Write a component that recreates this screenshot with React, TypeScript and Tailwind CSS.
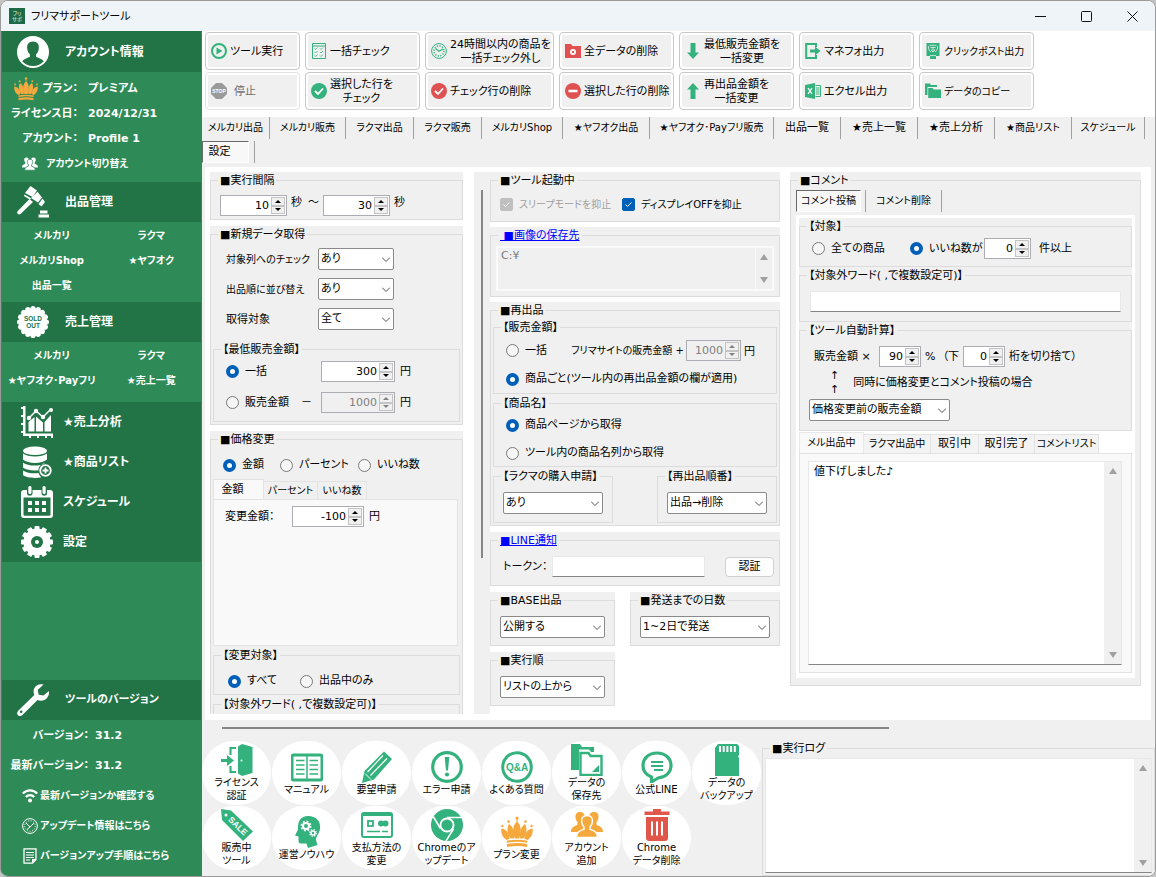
import React, { useState } from "react";
import clsx from "clsx";

/* ---------- Icons ---------- */

type IconProps = { className?: string };

function Svg({ className = "size-8", box = 32, children }: { className?: string; box?: number; children: React.ReactNode }) {
  return (
    <svg viewBox={`0 0 ${box} ${box}`} className={clsx("shrink-0", className)} fill="currentColor" aria-hidden="true">
      {children}
    </svg>
  );
}

function CrownIcon({ className }: IconProps) {
  const side = (
    <>
      <circle cx="7.6" cy="5.6" r="1.3" />
      <path d="M8 8c4.200 2.500 5.600 8 5 14.500H9.600C6.400 18.500 5.400 12.500 8 8z" />
      <circle cx="1.4" cy="10" r="1.2" />
      <path d="M.5 12.500c4.500.5 7.500 4 8.200 10.200L5.500 24C1.500 21.500-.5 17 .5 12.500z" />
    </>
  );
  return (
    <Svg className={className}>
      <circle cx="16" cy="2" r="1.600" />
      <path d="M15.400 3h1.200v3h-1.200zM16 5.500c4.500 4 4.600 10 2.200 17h-4.400c-2.400-7-2.300-13 2.200-17z" />
      {side}
      <g transform="translate(32 0) scale(-1 1)">{side}</g>
      <path d="M5.500 24.800c7-1.400 14-1.400 21 0l-.5 2c-7-1.400-13-1.400-20 0z" />
      <path d="M6 28c7-1.400 13-1.400 20 0v3c-7-1.300-13-1.300-20 0z" />
    </Svg>
  );
}

// outline is the colour behind the icon, it separates the front figure from the two at the back
function UsersIcon({ className, outline = "#fff" }: IconProps & { outline?: string }) {
  const back = (
    <path d="M9 3c3.600 0 5.300 2.500 4.600 6-.3 1.800-1 3-1.800 4v2l3.200 2v6H0c0-4.500 2.500-5.500 6.500-7.300V13c-1-1-1.600-2.400-1.900-4C4 5.500 5.400 3 9 3z" />
  );
  return (
    <Svg className={className}>
      {back}
      <g transform="translate(32 0) scale(-1 1)">{back}</g>
      <path
        d="M16 6.500c4.200 0 6 2.800 5.300 6.600-.3 2-1.200 3.700-2.200 4.700v2.400c4.500 2 7.400 2.800 7.400 8.300h-21c0-5.500 2.900-6.300 7.400-8.300v-2.400c-1-1-1.900-2.700-2.200-4.700-.7-3.800 1.100-6.600 5.300-6.600z"
        stroke={outline}
        strokeWidth="1.500"
      />
    </Svg>
  );
}

function AccountIcon() {
  return (
    <Svg>
      <circle cx="16" cy="16" r="16" />
      <path
        fill="#227447"
        d="M16 5.500c4.300 0 6.300 3 5.800 7-.2 2.400-1.200 4.500-2.700 5.800v2.500c3 1.700 6 2.200 7.700 4.400C24 28.300 20.500 30 16 30S8 28.300 5.200 25.200c1.700-2.200 4.700-2.700 7.700-4.400v-2.500c-1.500-1.300-2.500-3.400-2.700-5.800-.5-4 1.500-7 5.800-7z"
      />
    </Svg>
  );
}

function GavelIcon() {
  return (
    <Svg>
      <path d="M13.500 0l6.500 4.500-4.500 6.500L8 7z" />
      <path d="M8.500 8.300l19 11.500-1.300 2L7.300 10.200z" fill="none" />
      <path d="M20.500 5.800l4.500 5.700-4 5-7-4.500zM7.500 8.500l6.500 3.700-1 1.500-6-3.700zM25.500 12.500l2.500 3.500-3.500 4.500-3-2.500z" />
      <path d="M12.500 13l3.500 3L3.500 28c-2.200 1.500-4.500-1-2.700-3z" />
      <path d="M23 24.500h7.500v3H23zM21.500 28.500H32V31.500H21.500z" />
    </Svg>
  );
}

function SoldOutIcon() {
  const bumps = Array.from({ length: 16 }, (_, i) => i * 22.5);
  return (
    <Svg>
      <circle cx="16" cy="16" r="14" />
      {bumps.map((a) => (
        <circle key={a} cx="16" cy="2.600" r="2.600" transform={`rotate(${a} 16 16)`} />
      ))}
      <g fill="#227447" fontFamily="Liberation Sans, sans-serif" fontWeight="bold" fontSize="6.500" textAnchor="middle">
        <text x="16" y="15">SOLD</text>
        <text x="16" y="21.500">OUT</text>
      </g>
    </Svg>
  );
}

function AnalysisIcon() {
  return (
    <Svg>
      <path d="M2 0h2.500v27.500H32V30H2z" />
      <path d="M0 1h2v2H0zM0 9h2v2H0zM0 17h2v2H0zM0 25h2v2H0zM8 30h2v2H8zM16 30h2v2h-2zM24 30h2v2h-2zM30 30h2v2h-2z" />
      <path d="M7.500 16l6-5v14.500h-6zM15 10.500l7 6v9h-7zM23.500 16l6.500-7v16.500h-6.500z" />
      <path d="M8 12l7-7 7 6 8-8" fill="none" stroke="currentColor" strokeWidth="1.500" />
      <circle cx="8" cy="12" r="2.200" />
      <circle cx="15" cy="5" r="2.200" />
      <circle cx="22" cy="11" r="2.200" />
      <circle cx="30" cy="4" r="2" />
    </Svg>
  );
}

function DatabaseIcon() {
  return (
    <Svg>
      <ellipse cx="14" cy="4.800" rx="12" ry="4.300" />
      <path d="M2 7.500c5 4 19 4 24 0v6c-5 4.500-19 4.500-24 0z" />
      <path d="M2 16.500c5 4 16 4 22.500.8-4 .2-7 3-7 7-5 .6-12 0-15.500-2.800z" />
      <path d="M2 24.500c4 2.600 10 3.200 15.500 2.600.6 2 1.700 3.300 3 4.200-7 1.400-15.500.3-18.500-2.300z" />
      <circle cx="24.500" cy="24.500" r="5.300" fill="none" stroke="currentColor" strokeWidth="1.800" />
      <path d="M23.600 21.500h1.800v2.100h2.100v1.800h-2.100v2.100h-1.800v-2.100h-2.100v-1.800h2.100z" />
    </Svg>
  );
}

function CalendarIcon() {
  return (
    <Svg>
      <path d="M3 4h3v3.500c0 3 5.500 3 5.500 0V4h9v3.500c0 3 5.500 3 5.500 0V4h3c2 0 3 1 3 3v22c0 2-1 3-3 3H3c-2 0-3-1-3-3V7c0-2 1-3 3-3z" />
      <rect x="7.300" y="0" width="3.200" height="8" rx="1.500" />
      <rect x="21.500" y="0" width="3.200" height="8" rx="1.500" />
      <path fill="#227447" d="M2.500 11.500h27v17c0 .8-.4 1.200-1.200 1.200H3.700c-.8 0-1.200-.4-1.200-1.200z" />
      <path d="M7 15h4v4H7zM14 15h4v4h-4zM21 15h4v4h-4zM7 22h4v4H7zM14 22h4v4h-4zM21 22h4v4h-4z" />
    </Svg>
  );
}

function GearIcon() {
  const teeth = Array.from({ length: 12 }, (_, i) => i * 30);
  return (
    <Svg>
      <circle cx="16" cy="16" r="13.500" />
      {teeth.map((a) => (
        <rect key={a} x="13.500" y="0" width="5" height="6" rx="1" transform={`rotate(${a} 16 16)`} />
      ))}
      <circle cx="16" cy="16" r="6" fill="#227447" />
      <circle cx="16" cy="16" r="2" />
    </Svg>
  );
}

function WrenchIcon() {
  return (
    <Svg>
      <path d="M26.500.5c-3-1-8 0-9.500 4.500-.8 2.500-.3 4.500.3 6L1.200 26.800c-3 3.200 1 7.200 4.200 4.200L20.500 16c3 1.300 7 1 9.500-2 2-2.500 2.300-4.500 2-7l-5.500 4.500-4.800-.8-1-4.800z" />
      <circle cx="4.200" cy="27.800" r="1.300" fill="#227447" />
    </Svg>
  );
}

function WifiIcon() {
  return (
    <Svg className="size-4" box={16}>
      <g fill="none" stroke="currentColor" strokeWidth="2.200">
        <path d="M.8 5.500c4-4.300 10.400-4.300 14.400 0" />
        <path d="M3.800 9c2.400-2.500 6-2.500 8.400 0" />
      </g>
      <circle cx="8" cy="12.500" r="2" />
    </Svg>
  );
}

function InfoClockIcon() {
  return (
    <Svg className="size-4" box={16}>
      <g fill="none" stroke="currentColor">
        <circle cx="8" cy="8" r="7.400" />
        <circle cx="8" cy="8" r="5.300" strokeDasharray="1 1.500" />
        <path d="M4 5l4 4 4-4M8 9l-3 2.500" />
      </g>
    </Svg>
  );
}

function NoteIcon() {
  return (
    <Svg className="size-4" box={16}>
      <path d="M2 .8h12v10.700l-3.500 3.700H2z" fill="none" stroke="currentColor" strokeWidth="1.300" />
      <path d="M4 4h8v1H4zM4 6.500h8v1H4zM4 9h8v1H4zM4 11.500h4v1H4zM10 11h4l-4 4z" />
    </Svg>
  );
}

/* toolbar icons, 16px */

function PlayIcon() {
  return (
    <Svg className="size-4" box={16}>
      <circle cx="8" cy="8" r="7" fill="none" stroke="currentColor" strokeWidth="2" />
      <path d="M5.500 4.500l6 3.500-6 3.500z" />
    </Svg>
  );
}

function StopIcon() {
  return (
    <Svg className="size-4" box={16}>
      <path d="M5 0h6l5 5v6l-5 5H5l-5-5V5z" fill="#9a9a9a" />
      <text x="8" y="9.800" fill="#fff" fontSize="5" fontWeight="bold" textAnchor="middle" fontFamily="Liberation Sans, sans-serif">
        STOP
      </text>
    </Svg>
  );
}

function ChecklistIcon() {
  return (
    <Svg className="size-4" box={16}>
      <path d="M1.500.5h13v15h-13zM1.500 3h13" fill="none" stroke="currentColor" />
      <path d="M3.500 5.500l1 1L6.500 4.500M3.500 9l1 1L6.500 8M3.500 12.500l1 1 2-2M9 5.500l1 1 2-2M9 9l1 1 2-2M9 12.500l1 1 2-2" fill="none" stroke="currentColor" strokeWidth=".8" />
    </Svg>
  );
}

function ClockIcon() {
  return (
    <Svg className="size-4" box={16}>
      <circle cx="8" cy="8" r="7.400" fill="none" stroke="currentColor" strokeWidth="1" />
      <circle cx="8" cy="8" r="5" fill="none" stroke="currentColor" strokeWidth="1.500" strokeDasharray="1.200 1.400" />
      <path d="M4.500 5.500L8 8.300l4-2.300" fill="none" stroke="currentColor" strokeWidth="1.200" />
    </Svg>
  );
}

function CheckCircleIcon() {
  return (
    <Svg className="size-4" box={16}>
      <circle cx="8" cy="8" r="8" />
      <path d="M4 8l3 3 5-5.500" fill="none" stroke="#fff" strokeWidth="1.800" />
    </Svg>
  );
}

function MinusCircleIcon() {
  return (
    <Svg className="size-4" box={16}>
      <circle cx="8" cy="8" r="8" />
      <path d="M3.500 6.800h9v2.400h-9z" fill="#fff" />
    </Svg>
  );
}

function FolderDeleteIcon() {
  return (
    <Svg className="size-4" box={16}>
      <path d="M0 1h6l1.500 2H16V15H0z" />
      <circle cx="8" cy="9" r="3" fill="#fff" />
      <path d="M6.800 7.800l2.400 2.400M9.200 7.800l-2.400 2.400" stroke="currentColor" />
    </Svg>
  );
}

function ArrowIcon({ up }: { up?: boolean }) {
  return (
    <Svg className="size-4" box={16}>
      <path d="M5.500 0h5v9.500H14L8 16 2 9.500h3.500z" transform={up ? "rotate(180 8 8)" : undefined} />
    </Svg>
  );
}

function ExportIcon() {
  return (
    <Svg className="size-4" box={16}>
      <path d="M11 4V1H1.200v14H11v-3" fill="none" stroke="currentColor" strokeWidth="2" />
      <path d="M5 6.500h5V3.500L15.500 8 10 12.500v-3H5z" />
    </Svg>
  );
}

function ExcelIcon() {
  return (
    <Svg className="size-4" box={16}>
      <path d="M0 2l10-2v16L0 14z" />
      <path d="M10.500 2.500h5v11h-5" fill="none" stroke="currentColor" />
      <path d="M11 5h3.500M11 7h3.500M11 9h3.500M11 11h3.500" stroke="currentColor" />
      <path d="M3 5l4 6M7 5l-4 6" stroke="#fff" strokeWidth="1.300" />
    </Svg>
  );
}

function PostBoxIcon() {
  return (
    <Svg className="size-4" box={16}>
      <path d="M1.500 0h13v13h-3.500v3H5v-3H1.500z" />
      <g stroke="#f0f0f0" fill="none" strokeWidth=".8">
        <path d="M4.500 2.300h7M5.500 4.500h5M8 4.500v2M6 7l2 2 2-2zM3.500 3c-.5 3 1 5 2.500 6M12.500 3c.5 3-1 5-2.500 6M5 12.600h6" />
      </g>
    </Svg>
  );
}

function FoldersIcon() {
  return (
    <Svg className="size-4" box={16}>
      <path d="M0 .5h5l1 1.500h6v2H2.500v8H0z" />
      <path d="M3.200 5h4.500l1 1.500H16V15H3.200z" />
    </Svg>
  );
}

/* bottom launcher icons, 32px */

function DoorIcon() {
  return (
    <Svg>
      <path d="M17 2.500L21 0l10.500 3v26L21 32l-4-2.500z" />
      <circle cx="20.500" cy="16.500" r="1" fill="#fff" />
      <path d="M15 4H9.500v7M9.500 22v6H15" fill="none" stroke="currentColor" strokeWidth="2.200" />
      <path d="M0 15h6v-4l7 5.500L6 22v-4H0z" />
    </Svg>
  );
}

function BookIcon() {
  return (
    <Svg>
      <rect x="1" y="4" width="30" height="25" rx="2" fill="none" stroke="currentColor" strokeWidth="3" />
      <path d="M16 4v25M5 9.500h8.500M5 14h8.500M5 18.500h8.500M5 23h8.500M18.500 9.500H27M18.500 14H27M18.500 18.500H27M18.500 23H27" stroke="currentColor" strokeWidth="1.500" />
    </Svg>
  );
}

function PencilIcon() {
  return (
    <Svg>
      <path d="M23 .5l8 7.500L13 28.500 1 32l2.500-12z" />
      <path d="M6.500 21L22 4.500M9.500 24.500L26 7.500" stroke="#fff" strokeWidth="1.200" />
      <path d="M4 22.500l6 6" stroke="#fff" strokeWidth="1" />
    </Svg>
  );
}

function AlertIcon() {
  return (
    <Svg>
      <circle cx="16" cy="16" r="14.300" fill="none" stroke="currentColor" strokeWidth="3.200" />
      <path d="M13.700 6h4.600l-1.300 13.500h-2z" />
      <circle cx="16" cy="23.500" r="2.100" />
    </Svg>
  );
}

function QaIcon() {
  return (
    <Svg>
      <circle cx="16" cy="16" r="14.300" fill="none" stroke="currentColor" strokeWidth="3" />
      <text x="16" y="19.500" fontSize="10" fontWeight="bold" textAnchor="middle" fontFamily="Liberation Sans, sans-serif">
        Q&amp;A
      </text>
    </Svg>
  );
}

function SaveFolderIcon() {
  return (
    <Svg>
      <path d="M0 0h9l2 3h12v5h-3l-2-2.500H8V26H0z" />
      <path d="M9.500 9h8l2 3h11V31h-21z" fill="#fff" stroke="currentColor" strokeWidth="2.400" />
      <path d="M28 21v7h-7z" />
    </Svg>
  );
}

function SpeechIcon() {
  return (
    <Svg>
      <path d="M16 2c8 0 14 5 14 12.500S24 26.500 17 27l-6.500 4v-5C5.500 24 2 20 2 14.500 2 7 8 2 16 2z" fill="none" stroke="currentColor" strokeWidth="3.200" />
      <path d="M10 11h12M10 15h12M13 19h9" stroke="currentColor" strokeWidth="1.800" />
    </Svg>
  );
}

function SdCardIcon() {
  return (
    <Svg>
      <path d="M7 0h19l2 2v9l-1 1.500 1 1.500v18H4V4z" />
      <path d="M8 2h2v6H8zM11.700 2h2v6h-2zM15.400 2h2v6h-2zM19.100 2h2v6h-2zM22.800 2h2v6h-2z" fill="#fff" />
    </Svg>
  );
}

function SaleTagIcon() {
  return (
    <Svg>
      <path d="M0 0l10 1.500L32 22.500 22 32 1 11z" />
      <circle cx="5" cy="6" r="1.500" fill="#fff" />
      <text x="17" y="20" fontSize="8.500" fontWeight="bold" fill="#fff" textAnchor="middle" fontFamily="Liberation Sans, sans-serif" transform="rotate(44 17 17)">
        SALE
      </text>
    </Svg>
  );
}

function HeadIcon() {
  return (
    <Svg>
      <path d="M17 0c8 0 13 5 12 13-.5 4-4 7-4 11l1.500 5L17 32l-1.500-4.500H10c-2 0-2.500-1-2.500-3v-4L4 19.500l3-6C6.500 5 10 0 17 0z" />
      <g fill="none" stroke="#fff">
        <circle cx="15" cy="10" r="3" strokeWidth="2" />
        <circle cx="15" cy="10" r="4.600" strokeWidth="1.800" strokeDasharray="1.800 1.800" />
        <circle cx="22" cy="17" r="2" strokeWidth="1.600" />
        <circle cx="22" cy="17" r="3.300" strokeWidth="1.300" strokeDasharray="1.300 1.300" />
      </g>
    </Svg>
  );
}

function PayCardIcon() {
  return (
    <Svg>
      <rect x="1" y="4" width="30" height="24" rx="2" fill="none" stroke="currentColor" strokeWidth="2" />
      <path d="M2 6h28" stroke="currentColor" strokeWidth="2" />
      <rect x="7" y="12" width="5" height="5" fill="none" stroke="currentColor" strokeWidth="1.800" />
      <circle cx="20" cy="14.500" r="3" />
      <circle cx="24.500" cy="14.500" r="3" />
      <path d="M6 22.500h13M21 22.500h6" stroke="currentColor" strokeWidth="1.500" />
    </Svg>
  );
}

function BrowserIcon() {
  return (
    <Svg>
      <circle cx="16" cy="16" r="16" />
      <circle cx="16" cy="16" r="7.500" fill="#fff" />
      <circle cx="16" cy="16" r="5.600" />
      <path d="M16 8.500h14.500M9.500 19.500L2.200 7.500M22.500 19.800L15 32" stroke="#fff" strokeWidth="1.600" />
    </Svg>
  );
}

function TrashIcon() {
  return (
    <Svg>
      <path d="M12 0h8v2.500h8.500V6h-25V2.500H12zM5 8h22v21c0 2-1 3-3 3H8c-2 0-3-1-3-3z" />
      <path d="M11 12.500v14M16 12.500v14M21 12.500v14" stroke="#fff" strokeWidth="2" />
    </Svg>
  );
}

/* ---------- Form parts ---------- */

type GroupProps = { title: React.ReactNode; className?: string; bodyClass?: string; open?: boolean; children?: React.ReactNode };

function Group({ title, className, bodyClass, open, children }: GroupProps) {
  return (
    <div className={clsx("bg-[#f0f0f0]", className)}>
      <fieldset className={clsx("min-w-0 border border-[#dcdcdc]", open && "border-b-0")}>
        <legend className="ml-[7px] px-[2px] pt-[2px] leading-[14px] whitespace-nowrap">{title}</legend>
        <div className={bodyClass}>{children}</div>
      </fieldset>
    </div>
  );
}

function NumberBox({ value, label, className, disabled }: { value: number; label: string; className?: string; disabled?: boolean }) {
  const [n, setN] = useState(value);
  const step = "flex flex-1 items-center justify-center border border-[#c4c4c4] bg-[#f0f0f0]";
  return (
    <div
      className={clsx(
        "flex h-[21px] shrink-0 items-stretch border border-[#abadb3] p-px",
        disabled ? "bg-[#f0f0f0] text-[#808080]" : "bg-white text-black",
        className
      )}
    >
      <input
        type="text"
        inputMode="numeric"
        aria-label={label}
        disabled={disabled}
        value={n}
        onChange={(e) => setN(Number(e.target.value) || 0)}
        className="w-0 min-w-0 flex-1 bg-transparent pr-[2px] text-right outline-none"
      />
      <div className="flex w-[14px] flex-col">
        <button type="button" aria-label={`${label} 増やす`} disabled={disabled} onClick={() => setN(n + 1)} className={step}>
          <svg viewBox="0 0 6 3" className="h-[3px] w-[6px]" fill="currentColor"><path d="M3 0l3 3H0z" /></svg>
        </button>
        <button type="button" aria-label={`${label} 減らす`} disabled={disabled} onClick={() => setN(n - 1)} className={step}>
          <svg viewBox="0 0 6 3" className="h-[3px] w-[6px]" fill="currentColor"><path d="M3 3l3-3H0z" /></svg>
        </button>
      </div>
    </div>
  );
}

function Select({ id, label, options, className }: { id?: string; label?: string; options: string[]; className?: string }) {
  return (
    <div className={clsx("relative h-[22px] shrink-0", className)}>
      <select
        id={id}
        aria-label={label}
        className="h-full w-full appearance-none rounded-[2px] border border-[#8a8a8a] bg-white pl-[2px] leading-5 text-black"
      >
        {options.map((o) => (
          <option key={o}>{o}</option>
        ))}
      </select>
      <svg viewBox="0 0 8 5" className="pointer-events-none absolute top-[9px] right-[4px] h-[5px] w-[8px]" fill="none" stroke="#555">
        <path d="M0 .5l4 4 4-4" />
      </svg>
    </div>
  );
}

function Radio({ name, checked, children, className }: { name: string; checked?: boolean; children: React.ReactNode; className?: string }) {
  return (
    <label className={clsx("flex items-center gap-[6px] whitespace-nowrap", className)}>
      <input
        type="radio"
        name={name}
        defaultChecked={checked}
        className="size-[13px] shrink-0 appearance-none rounded-full border border-[#7a7a7a] bg-[#f6f6f6] checked:border-4 checked:border-[#005fb8] checked:bg-white"
      />
      {children}
    </label>
  );
}

function CheckBox({ checked, disabled, children, className }: { checked?: boolean; disabled?: boolean; children: React.ReactNode; className?: string }) {
  return (
    <label className={clsx("flex items-center gap-[6px] whitespace-nowrap", disabled && "text-[#a0a0a0]", className)}>
      <span className="relative flex size-[13px] shrink-0">
        <input
          type="checkbox"
          defaultChecked={checked}
          disabled={disabled}
          className="peer size-[13px] appearance-none rounded-[2px] border border-[#7a7a7a] bg-white checked:border-[#005fb8] checked:bg-[#005fb8] disabled:border-[#bfbfbf] disabled:bg-[#bfbfbf]"
        />
        <svg viewBox="0 0 13 13" className="pointer-events-none absolute inset-0 hidden peer-checked:block" fill="none" stroke="#fff">
          <path d="M3.500 6.500l2 2 4-4" />
        </svg>
      </span>
      {children}
    </label>
  );
}

function ScrollArrows({ className }: { className?: string }) {
  return (
    <div className={clsx("flex w-[17px] shrink-0 flex-col items-center justify-between bg-[#f0f0f0] py-[6px] text-[#a0a0a0]", className)} aria-hidden="true">
      <svg viewBox="0 0 8 6" className="h-[6px] w-[8px]" fill="currentColor"><path d="M4 0l4 6H0z" /></svg>
      <svg viewBox="0 0 8 6" className="h-[6px] w-[8px]" fill="currentColor"><path d="M4 6l4-6H0z" /></svg>
    </div>
  );
}

/* ---------- Sidebar ---------- */

function SideHeader({ icon, className = "h-10 text-[12px]", children }: { icon: React.ReactNode; className?: string; children: React.ReactNode }) {
  return (
    <h2 className={clsx("flex shrink-0 items-center gap-4 bg-[#227447] pl-[15px] font-bold", className)}>
      {icon}
      {children}
    </h2>
  );
}

function SideLinks({ items, className }: { items: string[]; className: string }) {
  return (
    <nav className={clsx("grid shrink-0 auto-rows-[25px] grid-cols-2 pt-px text-[10px]", className)}>
      {items.map((t) => (
        <a key={t} href="#" className="flex items-center justify-center whitespace-nowrap">{t}</a>
      ))}
    </nav>
  );
}

const sideMenu = [
  { icon: <AnalysisIcon />, text: "★売上分析" },
  { icon: <DatabaseIcon />, text: "★商品リスト" },
  { icon: <CalendarIcon />, text: "スケジュール" },
  { icon: <GearIcon />, text: "設定" },
];

const versionLinks = [
  { icon: <WifiIcon />, text: "最新バージョンか確認する" },
  { icon: <InfoClockIcon />, text: "アップデート情報はこちら" },
  { icon: <NoteIcon />, text: "バージョンアップ手順はこちら" },
];

function Sidebar() {
  return (
    <aside className="flex w-[201px] shrink-0 flex-col border-x border-[#6b6b6b] bg-[#2e8b57] text-[11px] font-bold text-white">
      <SideHeader className="h-[41px] text-[12px]" icon={<AccountIcon />}>アカウント情報</SideHeader>
      <div className="flex h-[110px] shrink-0 flex-col pt-1 *:h-[25px]">
        <div className="flex items-center">
          <span className="flex w-[76px] items-center justify-end gap-1 whitespace-nowrap">
            <CrownIcon className="size-6 text-[#f5a83c]" />
            プラン：
          </span>
          <span className="ml-[10px]">プレミアム</span>
        </div>
        <div className="flex items-center">
          <span className="w-[76px] text-right whitespace-nowrap">ライセンス日：</span>
          <span className="ml-[10px]">2024/12/31</span>
        </div>
        <div className="flex items-center">
          <span className="w-[76px] text-right whitespace-nowrap">アカウント：</span>
          <span className="ml-[10px]">Profile 1</span>
        </div>
        <button type="button" className="flex items-center gap-2 pl-5 text-[10px]">
          <UsersIcon className="size-4" outline="#2e8b57" />
          アカウント切り替え
        </button>
      </div>
      <SideHeader icon={<GavelIcon />}>出品管理</SideHeader>
      <SideLinks className="h-20" items={["メルカリ", "ラクマ", "メルカリShop", "★ヤフオク", "出品一覧"]} />
      <SideHeader icon={<SoldOutIcon />}>売上管理</SideHeader>
      <SideLinks className="h-[60px]" items={["メルカリ", "ラクマ", "★ヤフオク･Payフリ", "★売上一覧"]} />
      <nav className="shrink-0 bg-[#227447] text-[12px]">
        {sideMenu.map((m) => (
          <a key={m.text} href="#" className="flex h-10 items-center gap-[10px] pl-[19px]">
            {m.icon}
            {m.text}
          </a>
        ))}
      </nav>
      <div className="min-h-[118px] flex-1" />
      <SideHeader className="h-10 text-[11px]" icon={<WrenchIcon />}>ツールのバージョン</SideHeader>
      <div className="flex h-[156px] shrink-0 flex-col pt-px *:h-[30px]">
        <div className="flex items-center">
          <span className="w-[87px] text-right">バージョン：</span>
          <span className="ml-[6px]">31.2</span>
        </div>
        <div className="flex items-center">
          <span className="w-[87px] text-right whitespace-nowrap">最新バージョン：</span>
          <span className="ml-[6px]">31.2</span>
        </div>
        {versionLinks.map((v) => (
          <a key={v.text} href="#" className="flex items-center gap-[2px] pl-5 text-[10px] whitespace-nowrap">
            {v.icon}
            {v.text}
          </a>
        ))}
      </div>
    </aside>
  );
}

/* ---------- Toolbar and tabs ---------- */

const green = "text-[#34b27d]";
const red = "text-[#e05252]";

const tools = [
  { icon: <PlayIcon />, color: green, lines: ["ツール実行"] },
  { icon: <StopIcon />, color: green, lines: ["停止"], disabled: true },
  { icon: <ChecklistIcon />, color: green, lines: ["一括チェック"] },
  { icon: <CheckCircleIcon />, color: green, lines: ["選択した行を", "チェック"] },
  { icon: <ClockIcon />, color: green, lines: ["24時間以内の商品を", "一括チェック外し"] },
  { icon: <CheckCircleIcon />, color: red, lines: ["チェック行の削除"] },
  { icon: <FolderDeleteIcon />, color: red, lines: ["全データの削除"] },
  { icon: <MinusCircleIcon />, color: red, lines: ["選択した行の削除"] },
  { icon: <ArrowIcon />, color: green, lines: ["最低販売金額を", "一括変更"] },
  { icon: <ArrowIcon up />, color: green, lines: ["再出品金額を", "一括変更"] },
  { icon: <ExportIcon />, color: green, lines: ["マネフォ出力"] },
  { icon: <ExcelIcon />, color: green, lines: ["エクセル出力"] },
  { icon: <PostBoxIcon />, color: green, lines: ["クリックポスト出力"], small: true },
  { icon: <FoldersIcon />, color: green, lines: ["データのコピー"], small: true },
];

function Toolbar() {
  return (
    <div className="grid shrink-0 grid-flow-col grid-cols-[95px_115px_129px_115px_115px_115px_115px] grid-rows-[38px_38px] gap-x-[5px] gap-y-[2px] bg-white px-[3px] pt-px pb-[7px]">
      {tools.map((t) => (
        <button
          key={t.lines[0]}
          type="button"
          disabled={t.disabled}
          className={clsx(
            "flex items-center gap-[3px] rounded border bg-[#f0f0f0] pl-[5px] leading-[14px] whitespace-nowrap ring-2 ring-white ring-inset",
            t.disabled ? "border-[#e4e4e4] text-[#6d6d6d]" : "border-[#c8c8c8]"
          )}
        >
          <span className={t.color}>{t.icon}</span>
          <span className={clsx("pt-[2px] text-center", t.small && "text-[10px]", t.disabled && "pl-1")}>
            {t.lines.map((l) => (
              <span key={l} className="block">{l}</span>
            ))}
          </span>
        </button>
      ))}
    </div>
  );
}

const mainTabs = [
  { text: "メルカリ出品", w: "w-[68px] text-[10px]" },
  { text: "メルカリ販売", w: "w-[76px] text-[10px]" },
  { text: "ラクマ出品", w: "w-[68px] text-[10px]" },
  { text: "ラクマ販売", w: "w-[68px] text-[10px]" },
  { text: "メルカリShop", w: "w-[81px] text-[10px]" },
  { text: "★ヤフオク出品", w: "w-[87px] text-[10px]" },
  { text: "★ヤフオク･Payフリ販売", w: "w-[124px] text-[10px]" },
  { text: "出品一覧", w: "w-[67px]" },
  { text: "★売上一覧", w: "w-[77px]" },
  { text: "★売上分析", w: "w-[77px]" },
  { text: "★商品リスト", w: "w-[77px] text-[10px]" },
  { text: "スケジュール", w: "w-[73px] text-[10px]" },
];

const pressedTab = "border border-t-[#696969] border-l-[#696969] border-r-white border-b-white bg-[#f8f8f8]";

function MainTabs() {
  return (
    <div className="shrink-0 bg-[#f0f0f0]">
      <div className="flex h-[22px]">
        {mainTabs.map((t) => (
          <button key={t.text} type="button" className={clsx("shrink-0 border-r border-[#a0a0a0] whitespace-nowrap", t.w)}>
            {t.text}
          </button>
        ))}
      </div>
      <div className="flex h-7 gap-[5px] pt-[2px] pb-[4px]">
        <button type="button" className={clsx("w-[47px] pr-3", pressedTab)}>設定</button>
        <span className="border-l border-[#a0a0a0]" />
      </div>
    </div>
  );
}

/* ---------- Settings columns ---------- */

const fetchRows = [
  { id: "target-check", label: "対象列へのチェック", options: ["あり", "なし"], size: "text-[10px]" },
  { id: "sort-order", label: "出品順に並び替え", options: ["あり", "なし"], size: "text-[10px]" },
  { id: "fetch-target", label: "取得対象", options: ["全て", "出品中"], size: "text-[11px]" },
];

function FirstColumn() {
  return (
    <div className="flex h-[542px] w-[253px] shrink-0 flex-col gap-[6px] overflow-hidden">
      <Group title="■実行間隔" bodyClass="flex items-start pt-[7px] pb-[3px] pl-[9px]">
        <NumberBox value={10} label="最小秒数" className="w-[67px]" />
        <span className="ml-1">秒</span>
        <span className="ml-[6px]">～</span>
        <NumberBox value={30} label="最大秒数" className="ml-1 w-[67px]" />
        <span className="ml-1">秒</span>
      </Group>

      <Group title="■新規データ取得" bodyClass="px-[2px] pt-[6px] pb-[2px]">
        <div className="flex flex-col gap-2 pl-[13px]">
          {fetchRows.map((r) => (
            <div key={r.id} className="flex items-center">
              <label htmlFor={r.id} className={clsx("w-[92px] pt-[2px] whitespace-nowrap", r.size)}>{r.label}</label>
              <Select id={r.id} options={r.options} className="w-[76px]" />
            </div>
          ))}
        </div>
        <Group title="【最低販売金額】" className="mt-[11px]" bodyClass="flex flex-col gap-[10px] pt-1 pb-[8px] pl-3">
          <div className="flex items-center">
            <Radio name="min-price" checked className="w-[95px]">一括</Radio>
            <NumberBox value={300} label="一括金額" className="w-[74px]" />
            <span className="ml-[5px] pt-px">円</span>
          </div>
          <div className="flex items-center">
            <Radio name="min-price" className="w-[95px]">
              販売金額<span className="ml-[6px]">－</span>
            </Radio>
            <NumberBox value={1000} label="差引金額" disabled className="w-[74px]" />
            <span className="ml-[5px] pt-px">円</span>
          </div>
        </Group>
      </Group>

      <Group title="■価格変更" open bodyClass="px-[2px] pt-[9px]">
        <div className="flex h-[18px] items-center pl-[10px]">
          <Radio name="change-kind" checked className="w-[57px]">金額</Radio>
          <Radio name="change-kind" className="w-[78px]">パーセント</Radio>
          <Radio name="change-kind">いいね数</Radio>
        </div>
        <div className="mt-[5px] flex h-5 items-end">
          <button type="button" className="h-5 w-[51px] border border-b-0 border-[#e3e3e3] bg-[#f9f9f9] pr-3">金額</button>
          <button type="button" className="h-[18px] w-[54px] border-t border-r border-[#e3e3e3] text-[10px] whitespace-nowrap">パーセント</button>
          <button type="button" className="h-[18px] w-[49px] border-t border-r border-[#e3e3e3] text-[10px] whitespace-nowrap">いいね数</button>
        </div>
        <div className="mr-[2px] flex h-[147px] items-start border border-[#e3e3e3] bg-[#f9f9f9] pt-[6px] pl-[11px]">
          <span className="w-[67px] leading-[22px]">変更金額：</span>
          <NumberBox value={-100} label="変更金額" className="w-[72px]" />
          <span className="ml-[5px] leading-[22px]">円</span>
        </div>
        <Group title="【変更対象】" className="mt-px" bodyClass="flex pt-[9px] pb-[4px] pl-[14px]">
          <Radio name="change-target" checked className="h-[18px] w-[72px]">すべて</Radio>
          <Radio name="change-target" className="h-[18px]">出品中のみ</Radio>
        </Group>
        <Group title="【対象外ワード( ,で複数設定可)】" className="mt-px" open bodyClass="h-6" />
      </Group>
    </div>
  );
}

function SecondColumn() {
  return (
    <div className="flex w-[290px] shrink-0 flex-col gap-[5px]">
      <Group title="■ツール起動中" bodyClass="flex h-[33px] items-center pl-[9px] text-[10px]">
        <CheckBox checked disabled className="w-[122px]">スリープモードを抑止</CheckBox>
        <CheckBox checked>ディスプレイOFFを抑止</CheckBox>
      </Group>

      <Group title={<a href="#" className="text-[#0000ff] underline">&nbsp;■画像の保存先</a>} bodyClass="px-[5px] pt-[3px] pb-[5px]">
        <div className="flex h-[45px] border-2 border-[#fafafa]">
          <textarea
            aria-label="画像の保存先"
            readOnly
            defaultValue="C:¥"
            className="flex-1 resize-none overflow-hidden bg-[#f0f0f0] pl-[3px] text-[#7a7a7a] outline-none"
          />
          <ScrollArrows className="border-l border-[#fafafa]" />
        </div>
      </Group>

      <Group title="■再出品" bodyClass="flex flex-col gap-px px-[2px] pt-px pb-[2px]">
        <Group title="【販売金額】" bodyClass="flex flex-col gap-[9px] pt-[5px] pb-[5px] pl-3">
          <div className="flex items-center">
            <Radio name="relist-price" className="w-[63px]">一括</Radio>
            <span className="w-[117px] text-center text-[10px] whitespace-nowrap">フリマサイトの販売金額 +</span>
            <NumberBox value={1000} label="加算金額" disabled className="w-[55px]" />
            <span className="ml-[3px] pt-[2px]">円</span>
          </div>
          <Radio name="relist-price" checked className="h-[18px]">商品ごと(ツール内の再出品金額の欄が適用)</Radio>
        </Group>
        <Group title="【商品名】" bodyClass="flex flex-col gap-[10px] pt-[5px] pb-[4px] pl-3">
          <Radio name="relist-name" checked className="h-[18px]">商品ページから取得</Radio>
          <Radio name="relist-name" className="h-[18px]">ツール内の商品名列から取得</Radio>
        </Group>
        <div className="flex justify-between">
          <Group title="【ラクマの購入申請】" className="w-[120px]" bodyClass="px-[9px] pt-2 pb-2">
            <Select label="ラクマの購入申請" options={["あり", "なし"]} />
          </Group>
          <Group title="【再出品順番】" className="w-[120px]" bodyClass="px-[9px] pt-2 pb-2">
            <Select label="再出品順番" options={["出品→削除", "削除→出品"]} />
          </Group>
        </div>
      </Group>

      <Group
        title={<a href="#" className="text-[#0000ff] underline">■LINE通知</a>}
        className="mt-px"
        bodyClass="flex items-center py-2 pr-[5px] pl-3"
      >
        <label htmlFor="token" className="w-[49px] whitespace-nowrap">トークン：</label>
        <input id="token" type="text" className="h-[21px] w-[153px] border border-[#e8e8e8] border-b-[#868686] bg-white px-1 outline-none" />
        <button type="button" className="ml-auto h-5 w-[49px] rounded border border-[#d0d0d0] bg-[#fdfdfd]">認証</button>
      </Group>

      <div className="mt-px flex justify-between">
        <Group title="■BASE出品" className="w-[125px]" bodyClass="px-[9px] pt-2 pb-[7px]">
          <Select label="BASE出品" options={["公開する", "公開しない"]} />
        </Group>
        <Group title="■発送までの日数" className="w-[150px]" bodyClass="px-[9px] pt-2 pb-[7px]">
          <Select label="発送までの日数" options={["1~2日で発送", "2~3日で発送", "4~7日で発送"]} />
        </Group>
      </div>

      <Group title="■実行順" className="mt-px w-[125px]" bodyClass="px-[9px] pt-2 pb-[7px]">
        <Select label="実行順" options={["リストの上から", "リストの下から"]} />
      </Group>
    </div>
  );
}

const commentTabs = [
  { text: "ラクマ出品中", w: "w-[67px] text-[10px]" },
  { text: "取引中", w: "w-[48px]" },
  { text: "取引完了", w: "w-[56px]" },
  { text: "コメントリスト", w: "w-[64px] text-[10px]" },
];

function CommentColumn() {
  return (
    <div className="min-w-[351px] flex-1">
      <Group title="■コメント" bodyClass="px-[5px] pt-[2px] pb-[7px]">
        <div className="flex h-[22px] gap-1">
          <button type="button" className={clsx("w-[65px] text-[10px] whitespace-nowrap", pressedTab)}>コメント投稿</button>
          <button type="button" className="w-[77px] border-x border-[#a0a0a0] text-[10px] whitespace-nowrap">コメント削除</button>
        </div>
        <div className="mt-[3px] bg-white px-[3px] pt-[3px] pb-[5px]">
          <Group title="【対象】" bodyClass="flex items-center pt-[4px] pb-[7px] pl-3">
            <Radio name="comment-target" className="w-[98px]">全ての商品</Radio>
            <Radio name="comment-target" checked className="w-[74px]">いいね数が</Radio>
            <NumberBox value={0} label="いいね数" className="w-[47px]" />
            <span className="ml-2">件以上</span>
          </Group>
          <Group title="【対象外ワード( ,で複数設定可)】" bodyClass="px-[10px] pt-2 pb-[9px]">
            <input
              type="text"
              aria-label="対象外ワード"
              className="block h-[21px] w-full border border-[#e8e8e8] border-b-[#868686] bg-white px-1 outline-none"
            />
          </Group>
          <Group title="【ツール自動計算】" bodyClass="pt-2 pb-[9px] pl-[9px]">
            <div className="flex items-center gap-1 pl-[5px] whitespace-nowrap">
              <span className="w-[61px]">販売金額 ×</span>
              <NumberBox value={90} label="割合" className="w-[42px]" />
              <span className="flex w-[34px] justify-between">
                <span>%</span>
                <span>（下</span>
              </span>
              <NumberBox value={0} label="切り捨て桁数" className="w-[42px]" />
              <span>桁を切り捨て）</span>
            </div>
            <div className="flex h-8 items-center gap-[14px] pl-[21px]">
              <span className="leading-[14px]">↑<br />↑</span>
              <span>同時に価格変更とコメント投稿の場合</span>
            </div>
            <Select label="計算対象" options={["価格変更前の販売金額", "価格変更後の販売金額"]} className="w-[141px]" />
          </Group>
          <div className="mt-px flex h-[21px] items-end">
            <button type="button" className="h-[21px] w-[65px] border border-b-0 border-[#e8e8e8] bg-[#f9f9f9] text-[10px] whitespace-nowrap">メル出品中</button>
            {commentTabs.map((t) => (
              <button key={t.text} type="button" className={clsx("h-[19px] border-t border-r border-[#e3e3e3] bg-[#f3f3f3] whitespace-nowrap", t.w)}>
                {t.text}
              </button>
            ))}
          </div>
          <div className="border border-[#e3e3e3] bg-[#f9f9f9] py-[7px] pr-[9px] pl-2">
            <div className="flex h-[204px] border border-[#e8e8e8] border-b-[#868686] bg-white">
              <textarea
                aria-label="コメント"
                defaultValue="値下げしました♪"
                className="flex-1 resize-none overflow-hidden px-[5px] pt-[2px] outline-none"
              />
              <ScrollArrows />
            </div>
          </div>
        </div>
      </Group>
    </div>
  );
}

/* ---------- Bottom area ---------- */

const orange = "text-[#f5a83c]";

const shortcuts = [
  { icon: <DoorIcon />, color: green, lines: ["ライセンス", "認証"] },
  { icon: <BookIcon />, color: green, lines: ["マニュアル"] },
  { icon: <PencilIcon />, color: green, lines: ["要望申請"] },
  { icon: <AlertIcon />, color: green, lines: ["エラー申請"] },
  { icon: <QaIcon />, color: green, lines: ["よくある質問"] },
  { icon: <SaveFolderIcon />, color: green, lines: ["データの", "保存先"] },
  { icon: <SpeechIcon />, color: green, lines: ["公式LINE"] },
  { icon: <SdCardIcon />, color: green, lines: ["データの", "バックアップ"] },
  { icon: <SaleTagIcon />, color: green, lines: ["販売中", "ツール"] },
  { icon: <HeadIcon />, color: green, lines: ["運営ノウハウ"] },
  { icon: <PayCardIcon />, color: green, lines: ["支払方法の", "変更"] },
  { icon: <BrowserIcon />, color: green, lines: ["Chromeのア", "ップデート"] },
  { icon: <CrownIcon />, color: orange, lines: ["プラン変更"] },
  { icon: <UsersIcon />, color: orange, lines: ["アカウント", "追加"] },
  { icon: <TrashIcon />, color: "text-[#e0564a]", lines: ["Chrome", "データ削除"] },
];

function BottomArea() {
  return (
    <div className="flex items-start pt-[11px]">
      <div className="grid shrink-0 grid-cols-[repeat(8,70px)] gap-y-px pt-px">
        {shortcuts.map((s) => (
          <button
            key={s.lines.join("")}
            type="button"
            className="flex h-16 w-[69px] flex-col items-center justify-center rounded-full bg-white text-[10px] leading-[13px] whitespace-nowrap"
          >
            <span className={s.color}>{s.icon}</span>
            {s.lines.map((l) => (
              <span key={l}>{l}</span>
            ))}
          </button>
        ))}
      </div>
      <Group title="■実行ログ" className="min-w-0 flex-1" bodyClass="p-[2px]">
        <div className="flex h-[115px] border border-[#e8e8e8] border-b-[#868686] bg-white">
          <textarea aria-label="実行ログ" readOnly className="flex-1 resize-none overflow-hidden outline-none" />
          <ScrollArrows />
        </div>
      </Group>
    </div>
  );
}

/* ---------- Window ---------- */

function TitleBar() {
  return (
    <header className="flex h-[30px] shrink-0 items-center bg-[#eff4f9] pl-2">
      <span className="grid size-4 place-content-center bg-[#1c6b46] text-center text-[5px] leading-[6px] text-white">
        フリ
        <br />
        サポ
      </span>
      <h1 className="ml-[6px] flex-1 pt-px text-[11px]">フリマサポートツール</h1>
      <button type="button" aria-label="最小化" className="grid h-full w-[46px] place-content-center">
        <svg viewBox="0 0 11 11" className="size-[11px]" stroke="#111"><path d="M0 5.500h11" /></svg>
      </button>
      <button type="button" aria-label="最大化" className="grid h-full w-[46px] place-content-center">
        <svg viewBox="0 0 11 11" className="size-[11px]" fill="none" stroke="#111"><rect x=".5" y=".5" width="10" height="10" rx="1" /></svg>
      </button>
      <button type="button" aria-label="閉じる" className="grid h-full w-[46px] place-content-center">
        <svg viewBox="0 0 11 11" className="size-[11px]" stroke="#111"><path d="M.5.5l10 10M10.500.5l-10 10" /></svg>
      </button>
    </header>
  );
}

export default function App() {
  return (
    <div className="min-h-screen bg-[#c4c4c4] font-['DejaVu_Sans','Noto_Sans_CJK_JP',sans-serif] text-[11px] leading-4 text-black [font-feature-settings:'palt']">
      <div className="flex min-h-screen flex-col overflow-hidden rounded-lg border border-[#9a9a9a] bg-[#f0f0f0]">
        <TitleBar />
        <div className="flex flex-1">
          <Sidebar />
          <main className="flex min-w-0 flex-1 flex-col">
            <Toolbar />
            <MainTabs />
            <div className="mr-1 ml-[3px] flex items-start bg-white pt-[5px] pr-[10px] pb-[6px] pl-[5px]">
              <FirstColumn />
              <div className="ml-[11px] flex w-4 shrink-0 justify-center self-stretch bg-[#f0f0f0] pt-[18px]">
                <div className="h-[368px] w-[2px] bg-[#868686]" />
              </div>
              <SecondColumn />
              <div className="w-[10px] shrink-0" />
              <CommentColumn />
            </div>
            <div className="mt-[7px] ml-5 h-[2px] w-[70%] bg-[#868686]" />
            <BottomArea />
          </main>
        </div>
      </div>
    </div>
  );
}
